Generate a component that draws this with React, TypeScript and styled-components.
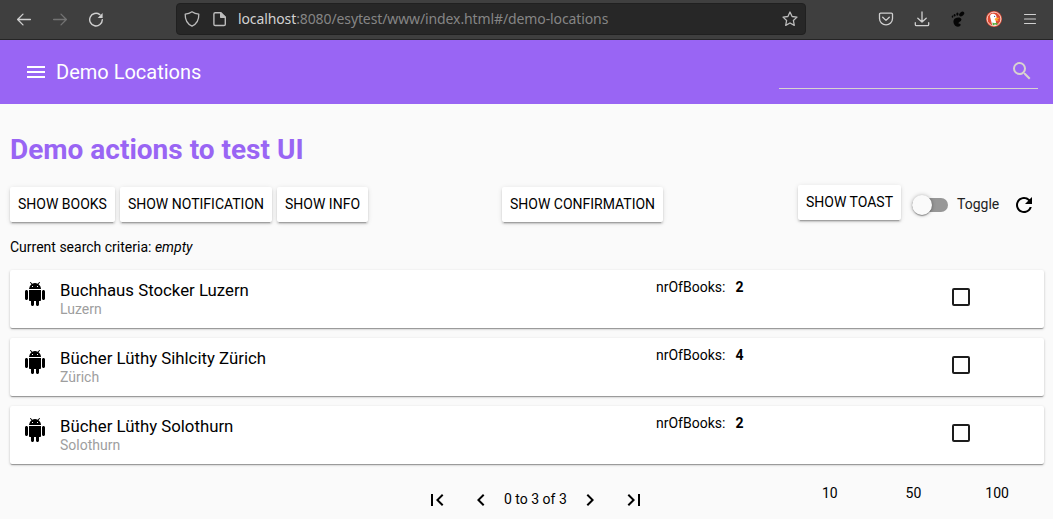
import React from "react";
import styled, { createGlobalStyle } from "styled-components";

const GlobalStyle = createGlobalStyle`
  * { box-sizing: border-box; }
  body {
    margin: 0;
    height: 519px;
    overflow: hidden;
    background: #fafafa;
    color: #000;
    font: 14px/20px Roboto, "Liberation Sans", sans-serif;
  }
  svg { display: block; flex: none; }
  button { font: inherit; color: inherit; border: 0; padding: 0; background: none; }
`;

const BrowserBar = styled.div`
  display: flex;
  height: 40px;
  padding: 3px 15px 0 16px;
  background: #3f3f3f;
  border-bottom: 1px solid #252525;
  color: #d6d6d6;
`;
const NavButtons = styled.div`
  display: flex;
  gap: 20px;
  width: 160px;
  height: 32px;
  align-items: center;
`;
const AddressBar = styled.div`
  display: flex;
  align-items: center;
  width: 630px;
  height: 32px;
  padding: 0 7px;
  background: #272727;
  border: 1px solid #202020;
  border-radius: 4px;
`;
const PageGlyph = styled.div`
  margin: 0 10px 0 12px;
`;
const Url = styled.div`
  flex: 1;
  color: #858585;
  font: 14px/20px "Noto Sans", "Open Sans", sans-serif;
  letter-spacing: -0.11px;
  white-space: nowrap;
  b { font-weight: 400; color: #d2d2d2; }
`;
const BrowserTools = styled.div`
  display: flex;
  flex: 1;
  justify-content: flex-end;
  align-items: center;
  gap: 20px;
  height: 32px;
`;

const AppBar = styled.header`
  display: flex;
  justify-content: space-between;
  height: 64px;
  padding: 0 15px 0 24px;
  background: #9965f4;
  color: #fff;
`;
const AppTitle = styled.div`
  display: flex;
  align-items: center;
  gap: 8px;
  font-size: 20px;
  line-height: 32px;
`;
const SearchField = styled.div`
  display: flex;
  justify-content: flex-end;
  width: 259px;
  height: 49px;
  padding: 19px 4px 0 0;
  border-bottom: 1px solid #d8d3cf;
  color: #d8d3cf;
`;

const Content = styled.main`
  padding: 29px 9px 0 10px;
`;
const Heading = styled.h1`
  margin: 0;
  color: #9965f4;
  font-size: 28px;
  line-height: 34px;
  font-weight: 700;
`;
const Actions = styled.div`
  display: grid;
  grid-template-columns: 492px 296px 1fr;
  margin-top: 18px;
  height: 52px;
`;
const ActionGroup = styled.div<{ $end?: boolean }>`
  display: flex;
  gap: 5px;
  align-items: flex-start;
  padding-top: ${(p) => (p.$end ? 0 : 2)}px;
`;
const ActionButton = styled.button`
  height: 35px;
  padding: 0 8px 1px;
  background: #fff;
  border-radius: 2px;
  line-height: 34px;
  white-space: nowrap;
  box-shadow: 0 3px 1px -2px rgba(0, 0, 0, 0.2), 0 2px 2px rgba(0, 0, 0, 0.14),
    0 1px 5px rgba(0, 0, 0, 0.12);
`;
const Toggle = styled.label`
  display: flex;
  align-items: center;
  gap: 9px;
  height: 40px;
  margin-left: 6px;
  color: #222;
`;
const Track = styled.span`
  display: flex;
  align-items: center;
  width: 36px;
  height: 14px;
  border-radius: 7px;
  background: #979797;
`;
const Thumb = styled.span`
  flex: none;
  width: 20px;
  height: 20px;
  border-radius: 50%;
  background: #fafafa;
  box-shadow: 0 2px 1px -1px rgba(0, 0, 0, 0.2), 0 1px 1px rgba(0, 0, 0, 0.14),
    0 1px 3px rgba(0, 0, 0, 0.12), 0 0 4px rgba(0, 0, 0, 0.25);
`;
const ToggleText = styled.span`
  padding-bottom: 2px;
`;
const RefreshButton = styled.button`
  margin: 8px 0 0 8px;
`;
const Criteria = styled.p`
  margin: 0;
  line-height: 20px;
`;
const CardList = styled.div`
  display: flex;
  flex-direction: column;
  gap: 10px;
  margin-top: 13px;
`;
const Card = styled.article`
  display: grid;
  grid-template-columns: 37px 596px 79.5px 216.5px 1fr;
  align-items: start;
  height: 58px;
  padding: 7px 0 0 13px;
  background: #fff;
  border-radius: 2px;
  box-shadow: 0 2px 1px -1px rgba(0, 0, 0, 0.2), 0 1px 1px rgba(0, 0, 0, 0.14),
    0 1px 3px rgba(0, 0, 0, 0.2);
`;
const IconCell = styled.div`
  padding-top: 5px;
`;
const Place = styled.div`
  padding-top: 3px;
`;
const PlaceName = styled.div`
  font-size: 16.8px;
  line-height: 20px;
`;
const PlaceCity = styled.div`
  color: #9e9e9e;
  line-height: 18px;
`;
const Checkbox = styled.span`
  width: 18px;
  height: 18px;
  margin-top: 11px;
  border: 2px solid #1d1d1d;
  border-radius: 2px;
`;
const Footer = styled.footer`
  display: flex;
  padding: 24px 0 0 415px;
`;
const Pager = styled.nav`
  display: flex;
  align-items: center;
  width: 363px;
  height: 24px;
`;
const PagerButton = styled.button<{ $gap?: number }>`
  margin-left: ${(p) => p.$gap ?? 0}px;
`;
const Range = styled.span`
  width: 63px;
  margin: 0 11px;
  padding-bottom: 2px;
  white-space: nowrap;
`;
const PageSizes = styled.div`
  display: grid;
  grid-template-columns: repeat(3, 1fr);
  width: 251px;
  height: 20px;
  margin-top: -5px;
  text-align: center;
`;

const Material = ({ d, size = 24 }: { d: string; size?: number }) => (
  <svg width={size} height={size} viewBox="0 0 24 24" fill="currentColor">
    <path d={d} />
  </svg>
);

const Line = ({ d, color = "#d0d0d0", width = 1.3 }: { d: string; color?: string; width?: number }) => (
  <svg width="16" height="16" viewBox="0 0 16 16" fill="none" stroke={color} strokeWidth={width} strokeLinecap="round" strokeLinejoin="round">
    <path d={d} />
  </svg>
);

const ICONS = {
  menu: "M3 18h18v-2H3v2zm0-5h18v-2H3v2zm0-7v2h18V6H3z",
  search:
    "M15.5 14h-.79l-.28-.27A6.471 6.471 0 0 0 16 9.5 6.5 6.5 0 1 0 9.5 16c1.61 0 3.09-.59 4.23-1.57l.27.28v.79l5 4.99L20.49 19l-4.99-5zm-6 0C7.01 14 5 11.99 5 9.5S7.01 5 9.5 5 14 7.01 14 9.5 11.99 14 9.5 14z",
  refresh:
    "M17.65 6.35A7.958 7.958 0 0 0 12 4c-4.42 0-7.99 3.58-7.99 8s3.57 8 7.99 8c3.73 0 6.84-2.55 7.73-6h-2.08A5.99 5.99 0 0 1 12 18c-3.31 0-6-2.69-6-6s2.69-6 6-6c1.66 0 3.14.69 4.22 1.78L13 11h7V4l-2.35 2.35z",
  android:
    "M6 18c0 .55.45 1 1 1h1v3.5c0 .83.67 1.5 1.5 1.5s1.5-.67 1.5-1.5V19h2v3.5c0 .83.67 1.5 1.5 1.5s1.5-.67 1.5-1.5V19h1c.55 0 1-.45 1-1V8H6v10zM3.5 8C2.67 8 2 8.67 2 9.5v7c0 .83.67 1.5 1.5 1.5S5 17.33 5 16.5v-7C5 8.67 4.33 8 3.5 8zm17 0c-.83 0-1.5.67-1.5 1.5v7c0 .83.67 1.5 1.5 1.5s1.5-.67 1.5-1.5v-7c0-.83-.67-1.5-1.5-1.5zm-4.97-5.84l1.3-1.3c.2-.2.2-.51 0-.71-.2-.2-.51-.2-.71 0l-1.48 1.48A5.84 5.84 0 0 0 12 1c-.96 0-1.86.23-2.66.63L7.85.15c-.2-.2-.51-.2-.71 0-.2.2-.2.51 0 .71l1.31 1.31A5.983 5.983 0 0 0 6 7h12c0-1.99-.97-3.75-2.47-4.84zM10 5H9V4h1v1zm5 0h-1V4h1v1z",
  first: "M18.41 16.59L13.82 12l4.59-4.59L17 6l-6 6 6 6zM6 6h2v12H6z",
  prev: "M15.41 7.41L14 6l-6 6 6 6 1.41-1.41L10.83 12z",
  next: "M10 6L8.59 7.41 13.17 12l-4.58 4.59L10 18l6-6z",
  last: "M5.59 7.41L10.18 12l-4.59 4.59L7 18l6-6-6-6zM16 6h2v12h-2z",
};

const places = [
  { name: "Buchhaus Stocker Luzern", city: "Luzern", books: 2 },
  { name: "Bücher Lüthy Sihlcity Zürich", city: "Zürich", books: 4 },
  { name: "Bücher Lüthy Solothurn", city: "Solothurn", books: 2 },
];

const FootIcon = () => (
  <svg width="16" height="16" viewBox="0 0 16 16" fill="#050505">
    <ellipse cx="11.7" cy="3" rx="1.9" ry="2.9" transform="rotate(50 11.7 3)" />
    <ellipse cx="7.4" cy="3.1" rx="1.1" ry="1.6" />
    <ellipse cx="4.6" cy="4.2" rx=".9" ry="1.3" />
    <ellipse cx="2.5" cy="5.7" rx=".8" ry="1.1" />
    <path d="M11.4 8.2C10.8 6 7.4 5.9 5 7.5 2.8 9 3 12.6 5.2 14.7c2 1.8 5 1.3 5.4-.6.2-1.1-.9-1.3-1.7-1.5-1.4-.4.6-1.4 1.2-2 .6-.7 1.5-1.4 1.3-2.4z" />
  </svg>
);

const DuckIcon = () => (
  <svg width="16" height="16" viewBox="0 0 16 16">
    <circle cx="8" cy="8" r="8" fill="#de4a33" />
    <circle cx="8" cy="8" r="6.9" fill="none" stroke="#fbe3dc" strokeWidth=".9" />
    <path d="M4.4 3.9c1-1.5 3.8-1.7 5.2-.2 1.2 1.3 1 3 .9 4.4L9.7 9.6l.6 4.6c-1.3.5-2.9.4-4.1 0L4.8 8.4C4.3 6.4 3.7 5 4.4 3.9z" fill="#fff" />
    <path d="M8.9 7.4c1.4-.9 3.2-.8 4.2-.6.6.4-.7 1.4-2 1.6l1.4.8c-.9.9-2.8.7-3.7-.2z" fill="#fdaa2f" />
    <path d="M6.4 11.5l2.4.8 2.5-.8.1 2.5-2.5-.4-2.2.8z" fill="#58ad3d" />
    <circle cx="8.6" cy="5.4" r=".6" fill="#355c9b" />
  </svg>
);

export default function App() {
  return (
    <>
      <GlobalStyle />
      <BrowserBar>
        <NavButtons>
          <Line d="M14.4 8.5H1.6M7 3.1L1.6 8.5 7 13.9" />
          <Line d="M1.6 8.5h12.8M9 3.1l5.4 5.4L9 13.9" color="#737373" />
          <svg width="16" height="16" viewBox="0 0 16 16" fill="none" stroke="#d0d0d0" strokeWidth="1.4" strokeLinecap="round">
            <path d="M14.3 8.7A6.3 6.3 0 1 1 11.8 3.6" />
            <path d="M14.6 2v4.9H9.7z" fill="#d0d0d0" stroke="none" />
          </svg>
        </NavButtons>
        <AddressBar>
          <Line d="M8 .8c2 1.4 4.3 2.1 6.8 2.3.2 5.4-1.7 9.8-6.8 12.1C2.9 12.9 1 8.5 1.2 3.1 3.7 2.9 6 2.2 8 .8z" color="#bcbcbc" />
          <PageGlyph>
            <svg width="16" height="16" viewBox="0 0 16 16" fill="none" stroke="#bcbcbc" strokeWidth="1.4" strokeLinejoin="round">
              <path d="M3.2 1.7h5.5l4.6 4.6v6.9c0 .8-.5 1.3-1.3 1.3H3.2c-.8 0-1.3-.5-1.3-1.3V3c0-.8.5-1.3 1.3-1.3z" />
              <path d="M8.7 1.7v4.6h4.6z" fill="#bcbcbc" />
            </svg>
          </PageGlyph>
          <Url>
            <b>localhost</b>:8080/esytest/www/index.html#/demo-locations
          </Url>
          <Line d="M8 1l2.1 4.5 4.9.6-3.6 3.4.9 4.9L8 12l-4.3 2.4.9-4.9L1 6.1l4.9-.6z" color="#bcbcbc" />
        </AddressBar>
        <BrowserTools>
          <Line d="M2.6 2.2h10.8c.7 0 1.1.4 1.1 1.1v4.1a6.5 6.5 0 0 1-13 0V3.3c0-.7.4-1.1 1.1-1.1zM4.7 6.2L8 9.4l3.3-3.2" />
          <Line d="M8 .9v10M3.8 7.2L8 11.1l4.2-3.9M1.3 11.7v1.7c0 .8.4 1.2 1.2 1.2h11c.8 0 1.2-.4 1.2-1.2v-1.7" />
          <FootIcon />
          <DuckIcon />
          <Line d="M2.5 3.5h11M2.5 8h11M2.5 12.5h11" width={1.1} />
        </BrowserTools>
      </BrowserBar>

      <AppBar>
        <AppTitle>
          <Material d={ICONS.menu} />
          Demo Locations
        </AppTitle>
        <SearchField>
          <Material d={ICONS.search} />
        </SearchField>
      </AppBar>

      <Content>
        <Heading>Demo actions to test UI</Heading>
        <Actions>
          <ActionGroup>
            <ActionButton>SHOW BOOKS</ActionButton>
            <ActionButton>SHOW NOTIFICATION</ActionButton>
            <ActionButton>SHOW INFO</ActionButton>
          </ActionGroup>
          <ActionGroup>
            <ActionButton>SHOW CONFIRMATION</ActionButton>
          </ActionGroup>
          <ActionGroup $end>
            <ActionButton>SHOW TOAST</ActionButton>
            <Toggle>
              <Track>
                <Thumb />
              </Track>
              <ToggleText>Toggle</ToggleText>
            </Toggle>
            <RefreshButton>
              <Material d={ICONS.refresh} />
            </RefreshButton>
          </ActionGroup>
        </Actions>
        <Criteria>
          Current search criteria: <i>empty</i>
        </Criteria>
        <CardList>
          {places.map((place) => (
            <Card key={place.name}>
              <IconCell>
                <Material d={ICONS.android} />
              </IconCell>
              <Place>
                <PlaceName>{place.name}</PlaceName>
                <PlaceCity>{place.city}</PlaceCity>
              </Place>
              <span>nrOfBooks:</span>
              <b>{place.books}</b>
              <Checkbox />
            </Card>
          ))}
        </CardList>
        <Footer>
          <Pager>
            <PagerButton>
              <Material d={ICONS.first} />
            </PagerButton>
            <PagerButton $gap={20}>
              <Material d={ICONS.prev} />
            </PagerButton>
            <Range>0 to 3 of 3</Range>
            <PagerButton>
              <Material d={ICONS.next} />
            </PagerButton>
            <PagerButton $gap={20}>
              <Material d={ICONS.last} />
            </PagerButton>
          </Pager>
          <PageSizes>
            <span>10</span>
            <span>50</span>
            <span>100</span>
          </PageSizes>
        </Footer>
      </Content>
    </>
  );
}
